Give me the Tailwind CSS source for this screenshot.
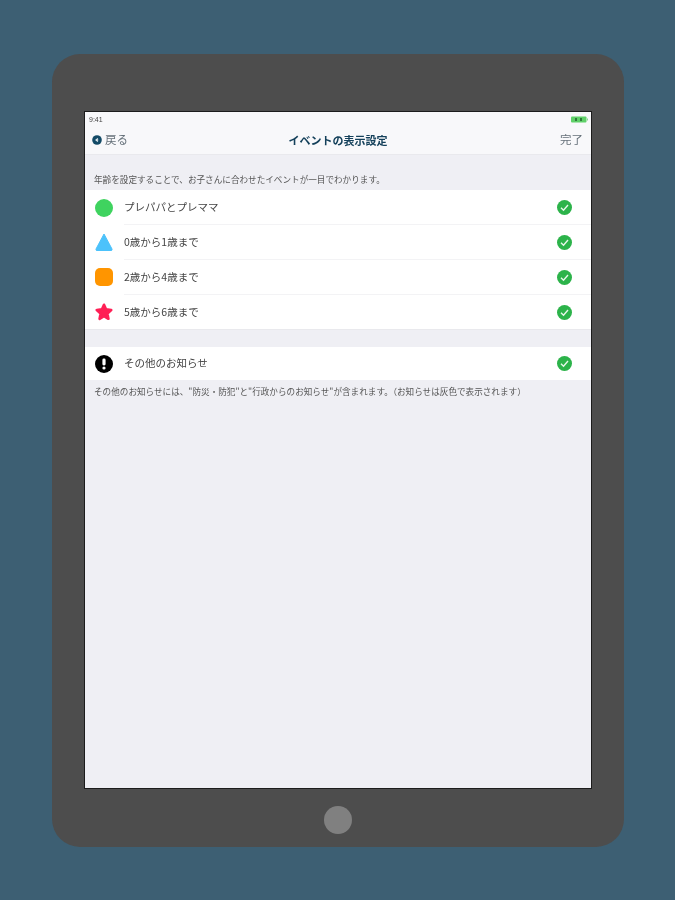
<!DOCTYPE html>
<html lang="ja">
<head>
<meta charset="utf-8">
<script src="https://cdn.jsdelivr.net/npm/@tailwindcss/browser@4"></script>
</head>
<body class="w-[675px] h-[900px] overflow-hidden bg-[#3d5f73] font-['Noto_Sans_CJK_JP','Noto_Sans',sans-serif] pt-[54px] pl-[52px]">
<div class="w-[572px] h-[793px] rounded-[28px] bg-[#4d4d4d] pt-[57px] pl-[32px] flex flex-col">
  <div class="w-[508px] h-[678px] border border-[#1c1c1c] bg-[#efeff4] flex flex-col shrink-0 blur-[0.4px]">
    <div class="bg-[#f8f8fa] h-[43px] flex flex-col border-b border-[#e9e9ed] shrink-0">
      <div class="h-[14px] flex items-center justify-between px-[4px] pr-[3px]">
        <span class="text-[7px] leading-none text-[#444] font-['Liberation_Sans',sans-serif]">9:41</span>
        <svg width="17" height="7" viewBox="0 0 17 7"><rect x="0" y="0.5" width="15.5" height="6" rx="1" fill="#5fd068"/><rect x="16" y="2.5" width="1" height="2" fill="#8ad590"/><rect x="4" y="2" width="2" height="3" fill="#2f7a3a"/><rect x="9" y="2" width="2" height="3" fill="#2f7a3a"/></svg>
      </div>
      <div class="flex-1 flex items-center justify-between pl-[7px] pr-[8px] relative">
        <div class="flex items-center gap-[3px]">
          <svg width="10" height="10" viewBox="0 0 10 10"><circle cx="5" cy="5" r="4.8" fill="#134a66"/><path d="M6 3.6 L4.2 5 L6 6.4" fill="none" stroke="#dfe8ee" stroke-width="1.4"/></svg>
          <span class="text-[11.5px] leading-none text-[#66717a]">戻る</span>
        </div>
        <span class="absolute left-0 right-0 text-center text-[11px] leading-none font-bold text-[#14405a]">イベントの表示設定</span>
        <span class="text-[11.5px] leading-none text-[#66717a]">完了</span>
      </div>
    </div>
    <div class="h-[35px] flex items-end pl-[9px] pb-[5px] shrink-0">
      <span class="text-[8.6px] leading-[12px] text-[#555] whitespace-nowrap">年齢を設定することで、お子さんに合わせたイベントが一目でわかります。</span>
    </div>
    <div class="bg-white flex flex-col shrink-0">
      <div class="h-[35px] flex items-center pl-[10px]">
        <svg width="18" height="18" viewBox="0 0 18 18" class="shrink-0"><circle cx="9" cy="9" r="9" fill="#3fd35f"/></svg>
        <div class="flex-1 h-full ml-[11px] flex items-center justify-between border-b border-[#f3f3f5] pr-[19px]">
          <span class="text-[10.5px] leading-none text-[#444]">プレパパとプレママ</span>
          <svg width="15" height="15" viewBox="0 0 15 15"><circle cx="7.5" cy="7.5" r="7.5" fill="#2cb34a"/><path d="M4 7.8 L6.5 10.2 L11 5" fill="none" stroke="#e8f7ea" stroke-width="1.4"/></svg>
        </div>
      </div>
      <div class="h-[35px] flex items-center pl-[10px]">
        <svg width="18" height="18" viewBox="0 0 18 18" class="shrink-0 -mt-[1px]"><path d="M9 1 L17 16 Q17.5 17.5 16 17.5 L2 17.5 Q0.5 17.5 1 16 Z" fill="#4cc2fb" stroke="#4cc2fb" stroke-width="1" stroke-linejoin="round"/></svg>
        <div class="flex-1 h-full ml-[11px] flex items-center justify-between border-b border-[#f3f3f5] pr-[19px]">
          <span class="text-[10.5px] leading-none text-[#444]">0歳から1歳まで</span>
          <svg width="15" height="15" viewBox="0 0 15 15"><circle cx="7.5" cy="7.5" r="7.5" fill="#2cb34a"/><path d="M4 7.8 L6.5 10.2 L11 5" fill="none" stroke="#e8f7ea" stroke-width="1.4"/></svg>
        </div>
      </div>
      <div class="h-[35px] flex items-center pl-[10px]">
        <div class="w-[18px] h-[18px] rounded-[5px] bg-[#ff9500] shrink-0 -mt-[1px]"></div>
        <div class="flex-1 h-full ml-[11px] flex items-center justify-between border-b border-[#f3f3f5] pr-[19px]">
          <span class="text-[10.5px] leading-none text-[#444]">2歳から4歳まで</span>
          <svg width="15" height="15" viewBox="0 0 15 15"><circle cx="7.5" cy="7.5" r="7.5" fill="#2cb34a"/><path d="M4 7.8 L6.5 10.2 L11 5" fill="none" stroke="#e8f7ea" stroke-width="1.4"/></svg>
        </div>
      </div>
      <div class="h-[34px] flex items-center pl-[10px]">
        <svg width="18" height="18" viewBox="0 0 18 18" class="shrink-0"><path d="M9 1.8 L11 6.3 L16.2 7 L12.4 10.6 L13.4 15.8 L9 13.2 L4.6 15.8 L5.6 10.6 L1.8 7 L7 6.3 Z" fill="#ff1f55" stroke="#ff1f55" stroke-width="2.6" stroke-linejoin="round"/></svg>
        <div class="flex-1 h-full ml-[11px] flex items-center justify-between pr-[19px]">
          <span class="text-[10.5px] leading-none text-[#444]">5歳から6歳まで</span>
          <svg width="15" height="15" viewBox="0 0 15 15"><circle cx="7.5" cy="7.5" r="7.5" fill="#2cb34a"/><path d="M4 7.8 L6.5 10.2 L11 5" fill="none" stroke="#e8f7ea" stroke-width="1.4"/></svg>
        </div>
      </div>
    </div>
    <div class="h-[18px] shrink-0 border-t border-[#e9e9ed]"></div>
    <div class="bg-white h-[33px] flex items-center pl-[10px] shrink-0">
      <svg width="18" height="18" viewBox="0 0 18 18" class="shrink-0"><circle cx="9" cy="9" r="9" fill="#000"/><rect x="7.4" y="3.5" width="3.2" height="7" rx="1.4" fill="#fff"/><circle cx="9" cy="13" r="1.6" fill="#fff"/></svg>
      <div class="flex-1 h-full ml-[11px] flex items-center justify-between pr-[19px]">
        <span class="text-[10.5px] leading-none text-[#444]">その他のお知らせ</span>
        <svg width="15" height="15" viewBox="0 0 15 15"><circle cx="7.5" cy="7.5" r="7.5" fill="#2cb34a"/><path d="M4 7.8 L6.5 10.2 L11 5" fill="none" stroke="#e8f7ea" stroke-width="1.4"/></svg>
      </div>
    </div>
    <div class="pl-[9px] pt-[5px]">
      <span class="block text-[8.6px] leading-[12px] text-[#555] whitespace-nowrap">その他のお知らせには、"防災・防犯"と"行政からのお知らせ"が含まれます。（お知らせは灰色で表示されます）</span>
    </div>
  </div>
  <div class="flex-1 flex items-center justify-center pr-[32px] pt-[4px]">
    <div class="w-[28px] h-[28px] rounded-full bg-[#808080]"></div>
  </div>
</div>
</body>
</html>
